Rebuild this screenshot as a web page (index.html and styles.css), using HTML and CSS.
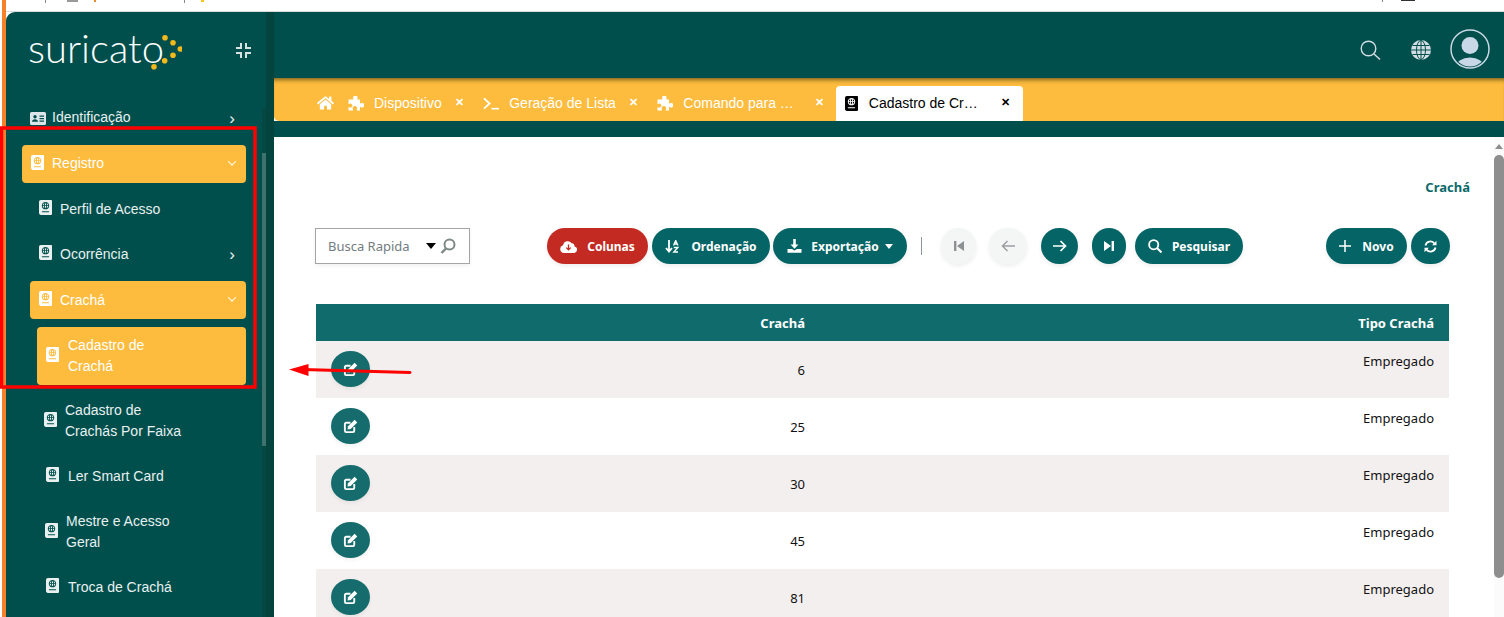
FILE: index.html
```html
<!DOCTYPE html>
<html lang="pt-BR">
  <head>
    <title>Cadastro de Crachá</title>
    <meta charset="utf-8" />
    <link rel="stylesheet" href="styles.css">
  </head>
  <body>
    <svg class="defs" width="0" height="0">
      <symbol id="i-passport" viewBox="0 0 448 512"><path d="M129.62 176h39.09c1.49-27.03 6.54-51.35 14.21-70.41-27.71 13.24-48.02 39.19-53.3 70.41zm0 32c5.29 31.22 25.59 57.17 53.3 70.41-7.68-19.06-12.72-43.38-14.21-70.41h-39.09zM224 286.69c7.69-7.45 20.77-34.42 23.43-78.69h-46.87c2.67 44.26 15.75 71.24 23.44 78.69zM200.57 176h46.87c-2.66-44.26-15.74-71.24-23.43-78.69-7.7 7.45-20.78 34.43-23.44 78.69zm64.51 102.41c27.71-13.24 48.02-39.19 53.3-70.41h-39.09c-1.49 27.03-6.53 51.35-14.21 70.41zM416 0H64C28.65 0 0 28.65 0 64v384c0 35.35 28.65 64 64 64h352c17.67 0 32-14.33 32-32V32c0-17.67-14.33-32-32-32zm-80 416H112c-8.8 0-16-7.2-16-16s7.2-16 16-16h224c8.8 0 16 7.2 16 16s-7.2 16-16 16zm-112-96c-70.69 0-128-57.31-128-128S153.31 64 224 64s128 57.31 128 128-57.31 128-128 128zm41.08-214.41c7.68 19.06 12.72 43.38 14.21 70.41h39.09c-5.28-31.22-25.59-57.17-53.3-70.41z"/></symbol>
      <symbol id="i-puzzle" viewBox="0 0 15 15"><path d="M0 3.500h4.600c.4 0 .3-.6.1-1A2.300 2.300 0 1 1 9 2.500c-.2.4-.3 1 .1 1h2.400v3.600c0 .4.6.3 1 .1a2.300 2.300 0 1 1 0 4c-.4-.2-1-.3-1 .1v3.200H8.500c-.4 0-.3-.6-.1-1a2.300 2.300 0 1 0-4 0c.2.4.3 1-.1 1H0v-3c0-.4.6-.3 1-.1a2 2 0 1 0 0-3.600c-.4.2-1 .3-1-.1z"/></symbol>
      <symbol id="i-home" viewBox="0 0 576 512"><path d="M280.37 148.26L96 300.11V464a16 16 0 0 0 16 16l112.06-.29a16 16 0 0 0 15.92-16V368a16 16 0 0 1 16-16h64a16 16 0 0 1 16 16v95.64a16 16 0 0 0 16 16.05L464 480a16 16 0 0 0 16-16V300L295.67 148.26a12.19 12.19 0 0 0-15.3 0zM571.6 251.47L488 182.56V44.05a12 12 0 0 0-12-12h-56a12 12 0 0 0-12 12v72.61L318.47 43a48 48 0 0 0-61 0L4.34 251.47a12 12 0 0 0-1.6 16.9l25.5 31A12 12 0 0 0 45.15 301l235.22-193.74a12.19 12.19 0 0 1 15.3 0L530.9 301a12 12 0 0 0 16.9-1.6l25.5-31a12 12 0 0 0-1.7-16.93z"/></symbol>
      <symbol id="i-edit" viewBox="0 0 16 16"><path d="M12 8.500V12.600a1.400 1.400 0 0 1-1.400 1.400H3.400A1.400 1.400 0 0 1 2 12.600V5.400A1.400 1.400 0 0 1 3.400 4H8" fill="none" stroke="currentColor" stroke-width="2"/><path d="M12.400 .8l2.800 2.800-7 7-3.400.6.600-3.400z"/></symbol>
    </svg>

    <div class="stripe"></div>
    <div class="page">
      <svg class="chrome-strip" width="1498" height="11">
        <rect x="39" y="0" width="1" height="3" fill="#888"/>
        <rect x="61" y="0" width="11" height="2" fill="#999"/>
        <rect x="88" y="0" width="2" height="2" fill="#f08a24"/>
        <rect x="178" y="0" width="1" height="3" fill="#888"/>
        <rect x="195" y="0" width="3" height="2" fill="#f5c518"/>
        <rect x="1376" y="0" width="1" height="2" fill="#888"/>
        <rect x="1395" y="0" width="14" height="1" fill="#333"/>
      </svg>

      <div class="app">
        <aside class="sidebar">
          <div class="brand">
            <div class="logo">
              <span class="logo-text">suricato</span>
              <svg class="logo-dots" width="32" height="36" viewBox="0 0 32 36">
                <circle cx="15" cy="3.700" r="2.800"/>
                <circle cx="23" cy="8.700" r="2.800"/>
                <circle cx="30.300" cy="15" r="2.800"/>
                <circle cx="23" cy="21.300" r="2.800"/>
                <circle cx="14.700" cy="26.700" r="2.800"/>
                <circle cx="4" cy="32.700" r="2.800"/>
              </svg>
            </div>
            <svg class="collapse" width="15" height="15" viewBox="0 0 15 15">
              <path d="M0 5h5V0M15 5h-5V0M0 10h5v5M15 10h-5v5" fill="none" stroke="currentColor" stroke-width="2"/>
            </svg>
          </div>

          <nav class="menu">
            <a class="item lvl-0">
              <svg class="ico-card" width="16" height="13" viewBox="0 0 16 13"><path fill-rule="evenodd" d="M1.500 0h13A1.500 1.500 0 0 1 16 1.500v10a1.500 1.500 0 0 1-1.500 1.500h-13A1.500 1.500 0 0 1 0 11.500v-10A1.500 1.500 0 0 1 1.500 0zM5 3a1.700 1.700 0 1 0 0 3.400A1.700 1.700 0 0 0 5 3zM2 9.800h6C8 8.200 6.800 7.200 5 7.200S2 8.200 2 9.800zM9.500 3.500v1.200H14V3.500zM9.500 6v1.200H14V6zM9.500 8.500v1.200H14V8.500z"/></svg>
              <span class="label">Identificação</span>
              <span class="chev">›</span>
            </a>
            <a class="item lvl-0 open">
              <svg class="ico"><use href="#i-passport"/></svg>
              <span class="label">Registro</span>
              <span class="chev down"></span>
            </a>
            <a class="item lvl-1 tight">
              <svg class="ico"><use href="#i-passport"/></svg>
              <span class="label">Perfil de Acesso</span>
            </a>
            <a class="item lvl-1 tight">
              <svg class="ico"><use href="#i-passport"/></svg>
              <span class="label">Ocorrência</span>
              <span class="chev">›</span>
            </a>
            <a class="item lvl-1 open">
              <svg class="ico"><use href="#i-passport"/></svg>
              <span class="label">Crachá</span>
              <span class="chev down"></span>
            </a>
            <a class="item lvl-2 open tall">
              <svg class="ico"><use href="#i-passport"/></svg>
              <span class="label">Cadastro de<br>Crachá</span>
            </a>
            <a class="item lvl-2 tall faixa">
              <svg class="ico"><use href="#i-passport"/></svg>
              <span class="label">Cadastro de<br>Crachás Por Faixa</span>
            </a>
            <a class="item lvl-2 tight">
              <svg class="ico"><use href="#i-passport"/></svg>
              <span class="label">Ler Smart Card</span>
            </a>
            <a class="item lvl-2 tall mestre">
              <svg class="ico"><use href="#i-passport"/></svg>
              <span class="label">Mestre e Acesso<br>Geral</span>
            </a>
            <a class="item lvl-2 tight">
              <svg class="ico"><use href="#i-passport"/></svg>
              <span class="label">Troca de Crachá</span>
            </a>
          </nav>
          <div class="side-scroll"><div class="side-thumb"></div></div>
        </aside>
        <div class="rail"></div>

        <main class="main">
          <header class="topbar">
            <svg class="top-ico" width="21" height="21" viewBox="0 0 21 21"><circle cx="8.500" cy="8.500" r="7.300" fill="none" stroke="currentColor" stroke-width="1.400"/><path d="M14 14l6 5.500" stroke="currentColor" stroke-width="1.500"/></svg>
            <svg class="top-ico globe" width="20" height="20" viewBox="0 0 20 20"><circle cx="10" cy="10" r="10"/><g fill="none" stroke="#004f4c" stroke-width="1"><ellipse cx="10" cy="10" rx="4.500" ry="9.500"/><path d="M10 0v20M0 10h20M1.500 5.500h17M1.500 14.500h17"/></g></svg>
            <svg class="avatar" width="40" height="40" viewBox="0 0 40 40">
              <defs><clipPath id="round"><circle cx="20" cy="20" r="17.500"/></clipPath></defs>
              <circle cx="20" cy="20" r="19" fill="none" stroke="#c9d8e6" stroke-width="1.500"/>
              <circle cx="20" cy="16.500" r="8.500" fill="#c9d8e6"/>
              <ellipse cx="20" cy="38" rx="14" ry="9.500" fill="#c9d8e6" clip-path="url(#round)"/>
            </svg>
          </header>

          <div class="tabstrip">
            <svg class="tab-home"><use href="#i-home"/></svg>
            <div class="tab">
              <svg class="tab-ico"><use href="#i-puzzle"/></svg>
              <span class="tab-name">Dispositivo</span>
              <span class="tab-close">✕</span>
            </div>
            <div class="tab">
              <svg class="tab-ico" viewBox="0 0 17 14"><path d="M1 1.500L7 7l-6 5.500" fill="none" stroke="currentColor" stroke-width="2"/><path d="M9 12.500h8" stroke="currentColor" stroke-width="1.800"/></svg>
              <span class="tab-name">Geração de Lista</span>
              <span class="tab-close">✕</span>
            </div>
            <div class="tab tab-cmd">
              <svg class="tab-ico"><use href="#i-puzzle"/></svg>
              <span class="tab-name clip">Comando para Envio</span>
              <span class="tab-close">✕</span>
            </div>
            <div class="tab active">
              <svg class="tab-ico pass"><use href="#i-passport"/></svg>
              <span class="tab-name clip">Cadastro de Crachá</span>
              <span class="tab-close">✕</span>
            </div>
          </div>
          <div class="under-tabs"></div>

          <section class="content">
            <h1 class="title">Crachá</h1>

            <div class="toolbar">
              <div class="quick">
                <span class="quick-text">Busca Rapida</span>
                <span class="caret"></span>
                <svg width="16" height="16" viewBox="0 0 16 16"><circle cx="9.500" cy="6.500" r="5" fill="none" stroke="#7d8a84" stroke-width="2"/><path d="M6 10.500L1.500 15" stroke="#7d8a84" stroke-width="2.400"/></svg>
              </div>

              <button class="btn red colunas">
                <svg width="17" height="13" viewBox="0 0 17 13"><path fill="#fff" d="M4 13a4 4 0 0 1-1-7.800A4.800 4.800 0 0 1 11.500 3 3.500 3.500 0 0 1 14.500 6.500 3.300 3.300 0 0 1 13.500 13z"/><path d="M8.500 4.500v5M6.300 7.600l2.200 2.200 2.200-2.200" fill="none" stroke="#c32a21" stroke-width="1.300"/></svg>
                Colunas
              </button>
              <button class="btn ordem">
                <svg width="14" height="13" viewBox="0 0 14 13"><path d="M4 0v11M1 8l3 3.500L7 8" fill="none" stroke="#fff" stroke-width="1.800"/><path d="M8.500 5.500L10.700.5l2.200 5M9.500 4h2.500M8.800 7.500h4l-4 4.500h4.200" fill="none" stroke="#fff" stroke-width="1.300"/></svg>
                Ordenação
              </button>
              <button class="btn export">
                <svg width="15" height="14" viewBox="0 0 15 14"><path d="M7.500 0v7" stroke="#fff" stroke-width="2.600"/><path d="M3.500 5.500h8l-4 4.300z" fill="#fff"/><path d="M.5 10h4.500l2.500 1.500L10 10h4.500v3.800H.5z" fill="#fff"/></svg>
                Exportação
                <span class="caret small"></span>
              </button>
              <span class="sep"></span>
              <button class="btn round off first">
                <svg width="10" height="10" viewBox="0 0 10 10"><path d="M0 0h2.400v10H0zM10 0v10L3 5z" fill="#8c9294"/></svg>
              </button>
              <button class="btn round off prev">
                <svg width="14" height="12" viewBox="0 0 14 12"><path d="M14 6H2M6.500 1L1.500 6l5 5" fill="none" stroke="#9a9fa1" stroke-width="1.500"/></svg>
              </button>
              <button class="btn round next">
                <svg width="14" height="12" viewBox="0 0 14 12"><path d="M0 6h12M7.500 1l5 5-5 5" fill="none" stroke="#fff" stroke-width="1.700"/></svg>
              </button>
              <button class="btn round last">
                <svg width="10" height="10" viewBox="0 0 10 10"><path d="M10 0H7.600v10H10zM0 0v10l7-5z" fill="#fff"/></svg>
              </button>
              <button class="btn search">
                <svg width="14" height="14" viewBox="0 0 14 14"><circle cx="5.700" cy="5.700" r="4.600" fill="none" stroke="#fff" stroke-width="1.800"/><path d="M9 9l4.500 4.500" stroke="#fff" stroke-width="2"/></svg>
                Pesquisar
              </button>
              <button class="btn novo">
                <svg width="12" height="12" viewBox="0 0 12 12"><path d="M6 0v12M0 6h12" stroke="#fff" stroke-width="1.500"/></svg>
                Novo
              </button>
              <button class="btn round refresh">
                <svg width="13" height="13" viewBox="0 0 13 13"><path d="M1.500 5.500A5 5 0 0 1 10.500 3.500M11.500 7.500A5 5 0 0 1 2.500 9.500" fill="none" stroke="#fff" stroke-width="1.800"/><path d="M12.500.8v4.400H8.100zM.5 12.200V7.800h4.400z" fill="#fff"/></svg>
              </button>
            </div>

            <table class="grid">
              <thead>
                <tr><th class="c-act"></th><th class="c-num">Crachá</th><th class="c-tipo">Tipo Crachá</th></tr>
              </thead>
              <tbody>
                <tr><td class="c-act"><button class="btn-edit"><svg><use href="#i-edit"/></svg></button></td><td class="c-num">6</td><td class="c-tipo">Empregado</td></tr>
                <tr><td class="c-act"><button class="btn-edit"><svg><use href="#i-edit"/></svg></button></td><td class="c-num">25</td><td class="c-tipo">Empregado</td></tr>
                <tr><td class="c-act"><button class="btn-edit"><svg><use href="#i-edit"/></svg></button></td><td class="c-num">30</td><td class="c-tipo">Empregado</td></tr>
                <tr><td class="c-act"><button class="btn-edit"><svg><use href="#i-edit"/></svg></button></td><td class="c-num">45</td><td class="c-tipo">Empregado</td></tr>
                <tr><td class="c-act"><button class="btn-edit"><svg><use href="#i-edit"/></svg></button></td><td class="c-num">81</td><td class="c-tipo">Empregado</td></tr>
              </tbody>
            </table>

            <div class="page-scroll">
              <span class="scroll-up"></span>
              <div class="page-thumb"></div>
            </div>
          </section>
        </main>
      </div>
    </div>

    <!-- marcacao vermelha por cima da tela -->
    <svg class="markup" width="1504" height="617" viewBox="0 0 1504 617">
      <rect x="1.500" y="128" width="253.500" height="259" fill="none" stroke="#f00" stroke-width="3.500"/>
      <path d="M303 369.500L410 372.500" stroke="#f00" stroke-width="3" stroke-linecap="round"/>
      <path d="M289 369.500L308.500 364v12z" fill="#f00"/>
    </svg>
  </body>
</html>
```

FILE: styles.css
```css
* {
  box-sizing: border-box;
}

html,
body {
  height: 100%;
}

body {
  display: flex;
  margin: 0;
  overflow: hidden;
  background-color: #ffffff;
  font-family: "Liberation Sans", Arial, sans-serif;
  font-size: 14px;
}

.defs {
  position: absolute;
}

.stripe {
  flex: none;
  width: 4px;
  margin-left: 2px;
  background-color: #f5822a;
}

.page {
  flex: 1;
  display: flex;
  flex-direction: column;
  min-width: 0;
}

.chrome-strip {
  flex: none;
  display: block;
  height: 11px;
}

.app {
  flex: 1;
  display: flex;
  min-height: 0;
  border-top: 1px solid #d6dcdb;
}

/* sidebar */

.sidebar {
  position: relative;
  flex: none;
  width: 260px;
  overflow: hidden;
  border-top-left-radius: 9px;
  background-color: #004f4c;
  color: #e9f0f0;
}

.rail {
  flex: none;
  width: 8px;
  background-color: #04443f;
}

.brand {
  display: flex;
  align-items: center;
  height: 87px;
  padding: 0 0 10px 22px;
}

.logo {
  display: flex;
  align-items: flex-start;
  width: 207px;
  margin-top: -5px;
}

.logo-text {
  font-family: Lato, sans-serif;
  font-weight: 300;
  font-size: 40px;
  line-height: 48px;
  color: #ffffff;
}

.logo-dots {
  margin: 10px 0 0 -14px;
  fill: #f3b81c;
}

.collapse {
  margin-left: 1px;
  color: #d9e2e2;
}

.menu {
  display: flex;
  flex-direction: column;
  width: 240px;
}

.item {
  display: flex;
  align-items: center;
  height: 38px;
  margin-top: 8px;
  padding-left: 9px;
  border-radius: 4px;
  line-height: 21px;
}

.item:first-child {
  margin-top: 0;
}

.item.tight {
  margin-top: 7px;
}

.item.tall {
  height: 58px;
}

.item.open {
  background-color: #fdbc3e;
  color: #ffffff;
}

.lvl-0 {
  margin-left: 16px;
}

.lvl-1 {
  margin-left: 24px;
}

.lvl-2 {
  margin-left: 31px;
}

.lvl-0 .label {
  padding-bottom: 2px;
}

.lvl-2 .label {
  padding-left: 1px;
}

.faixa {
  margin-top: 7px;
  margin-left: 29px;
}

.faixa .label {
  padding-left: 0;
}

.mestre {
  margin-left: 30px;
}

.mestre .label {
  padding-left: 0;
}

.ico {
  flex: none;
  width: 13px;
  height: 15px;
  margin: -3px 8px 0 0;
  fill: currentColor;
}

.ico-card {
  flex: none;
  margin: 0 6px 0 -1px;
  fill: #dce5ea;
}

.label {
  flex: 1;
}

.chev {
  flex: none;
  width: 14px;
  margin-right: 7px;
  font-size: 17px;
  line-height: 17px;
  text-align: center;
}

.chev.down {
  height: 8px;
}

.chev.down::before {
  content: "";
  display: block;
  width: 5px;
  height: 5px;
  margin: 0 auto;
  border-right: 1.5px solid #ffffff;
  border-bottom: 1.5px solid #ffffff;
  transform: rotate(45deg) translate(-1px, -1px);
}

.side-scroll {
  position: absolute;
  top: 96px;
  right: 0;
  bottom: 0;
  width: 4px;
  background-color: #044844;
}

.side-thumb {
  height: 293px;
  margin-top: 45px;
  background-color: #3f716d;
}

/* header and tabs */

.main {
  position: relative;
  flex: 1;
  display: flex;
  flex-direction: column;
  min-width: 0;
}

.topbar {
  flex: none;
  display: flex;
  align-items: center;
  justify-content: flex-end;
  height: 66px;
  padding: 10px 14px 0 0;
  background-color: #004f4c;
}

.top-ico {
  margin-right: 30px;
  color: #d3dde3;
  fill: #d3dde3;
}

.globe {
  margin-right: 19px;
}

.avatar {
  margin-top: -2px;
}

.tabstrip {
  flex: none;
  display: flex;
  align-items: flex-end;
  height: 43px;
  padding-left: 43px;
  border-bottom-left-radius: 5px;
  background-color: #fdbc3e;
  box-shadow: inset 0 5px 4px -3px rgba(60, 50, 10, 0.65);
  color: #ffffff;
}

.tab-home {
  flex: none;
  width: 17px;
  height: 16px;
  margin: 0 14px 10px 0;
  fill: currentColor;
}

.tab {
  flex: none;
  display: flex;
  align-items: center;
  height: 35px;
  margin-right: 19.5px;
  padding-bottom: 2px;
}

.tab-ico {
  flex: none;
  width: 16px;
  height: 15px;
  margin-right: 10px;
  margin-top: 1px;
  fill: currentColor;
}

.tab-name {
  white-space: nowrap;
}

.tab-name.clip {
  overflow: hidden;
  text-overflow: ellipsis;
}

.tab-cmd .tab-name {
  width: 119px;
}

.tab-close {
  margin-left: 13px;
  font-size: 11px;
  font-weight: 700;
}

.tab.active {
  width: 187px;
  margin: 0 0 0 -8px;
  padding-left: 9px;
  border-radius: 4px 4px 0 0;
  background-color: #ffffff;
  color: #000000;
}

.tab.active .tab-name {
  width: 115px;
}

.tab-ico.pass {
  width: 13px;
  margin-right: 11px;
}

.tab.active .tab-close {
  margin-left: 17px;
}

.under-tabs {
  flex: none;
  height: 16px;
  background-color: #004f4c;
}

/* content */

.content {
  position: relative;
  flex: 1;
  min-height: 0;
  padding: 0 54px 0 42px;
  overflow: hidden;
  background-color: #ffffff;
  font-family: "Noto Sans", sans-serif;
}

.title {
  margin: 41px -20px 0 0;
  font-size: 13px;
  line-height: 18px;
  font-weight: 700;
  text-align: right;
  color: #0c6a6b;
}

.toolbar {
  display: flex;
  align-items: center;
  height: 36px;
  margin-top: 32px;
  margin-left: -1px;
}

.quick {
  flex: none;
  display: flex;
  align-items: center;
  width: 155px;
  height: 36px;
  padding: 0 13px 0 12px;
  border: 1px solid #a5a5a5;
  box-shadow: 0 2px 4px rgba(0, 0, 0, 0.06);
  color: #737c80;
  font-size: 13px;
}

.quick-text {
  flex: 1;
  white-space: nowrap;
}

.caret {
  width: 0;
  height: 0;
  border-left: 5.5px solid transparent;
  border-right: 5.5px solid transparent;
  border-top: 6px solid #000000;
}

.caret.small {
  margin-left: -3px;
  border-left-width: 4.5px;
  border-right-width: 4.5px;
  border-top: 5px solid #ffffff;
}

.quick svg {
  margin-left: 4px;
}

.btn {
  flex: none;
  display: flex;
  align-items: center;
  justify-content: center;
  gap: 9px;
  height: 36px;
  padding: 0;
  border: 0;
  border-radius: 18px;
  background-color: #056566;
  box-shadow: 0 2px 4px rgba(0, 0, 0, 0.07);
  color: #ffffff;
  font-family: "Noto Sans", sans-serif;
  font-size: 12px;
  font-weight: 700;
}

.btn.red {
  background-color: #c32a21;
}

.colunas {
  width: 101px;
  margin-left: 77px;
  gap: 10px;
}

.ordem {
  width: 118px;
  margin-left: 4px;
  gap: 12px;
}

.export {
  width: 134px;
  margin-left: 3px;
}

.sep {
  flex: none;
  width: 1px;
  height: 18px;
  margin-left: 14px;
  background-color: #8a9798;
}

.btn.off {
  background-color: #f4f5f5;
}

.first {
  width: 35px;
  margin-left: 19px;
}

.prev {
  width: 38px;
  margin-left: 13px;
}

.next {
  width: 37px;
  margin-left: 14px;
}

.last {
  width: 34px;
  margin-left: 14px;
}

.search {
  width: 108px;
  margin-left: 9px;
  gap: 10px;
}

.novo {
  width: 81px;
  margin-left: 83px;
  gap: 11px;
}

.refresh {
  width: 39px;
  margin-left: 4px;
}

/* table */

.grid {
  width: 1133px;
  margin-top: 40px;
  border-collapse: collapse;
  table-layout: fixed;
  font-size: 13px;
  color: #111111;
}

.grid th {
  height: 37px;
  padding: 0 15px;
  background-color: #0f6b6c;
  color: #ffffff;
  font-size: 13px;
  font-weight: 700;
  text-align: right;
}

.grid td {
  height: 57px;
  padding: 0 15px;
  vertical-align: top;
  text-align: right;
}

.grid tbody tr:nth-child(odd) {
  background-color: #f3efef;
}

.c-act {
  width: 100px;
}

.c-num {
  width: 404px;
}

.grid td.c-num {
  padding-top: 20px;
}

.grid td.c-tipo {
  padding-top: 11px;
}

.grid td.c-act {
  padding-top: 10px;
  text-align: left;
}

.btn-edit {
  display: flex;
  align-items: center;
  justify-content: center;
  width: 39px;
  height: 36px;
  padding: 0;
  border: 0;
  border-radius: 50%;
  background-color: #166c6c;
  box-shadow: 0 2px 4px rgba(0, 0, 0, 0.06);
  color: #ffffff;
}

.btn-edit svg {
  width: 15px;
  height: 15px;
  fill: currentColor;
}

.page-scroll {
  position: absolute;
  top: 0;
  right: 0;
  bottom: 0;
  width: 10px;
  background-color: #fbfbfb;
}

.scroll-up {
  display: block;
  width: 0;
  height: 0;
  margin: 7px auto 6px;
  border-left: 4.5px solid transparent;
  border-right: 4.5px solid transparent;
  border-bottom: 5px solid #8e8e8e;
}

.page-thumb {
  height: 423px;
  border-radius: 5px;
  background-color: #8e8e8e;
}

/* annotation */

.markup {
  position: absolute;
  top: 0;
  left: 0;
  pointer-events: none;
}
```
